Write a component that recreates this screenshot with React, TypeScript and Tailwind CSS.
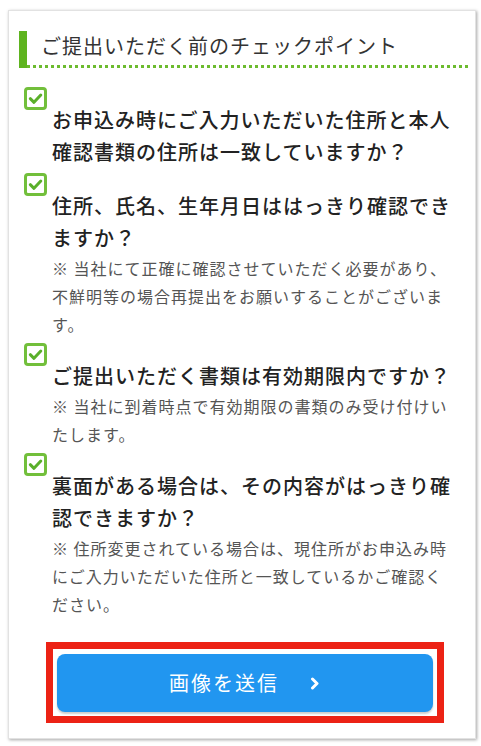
import React from "react";

type CheckItem = {
  question: string;
  note?: string;
};

const items: CheckItem[] = [
  { question: "お申込み時にご入力いただいた住所と本人確認書類の住所は一致していますか？" },
  {
    question: "住所、氏名、生年月日ははっきり確認できますか？",
    note: "※ 当社にて正確に確認させていただく必要があり、不鮮明等の場合再提出をお願いすることがございます。"
  },
  {
    question: "ご提出いただく書類は有効期限内ですか？",
    note: "※ 当社に到着時点で有効期限の書類のみ受け付けいたします。"
  },
  {
    question: "裏面がある場合は、その内容がはっきり確認できますか？",
    note: "※ 住所変更されている場合は、現住所がお申込み時にご入力いただいた住所と一致しているかご確認ください。"
  }
];

function CheckBox() {
  return (
    <svg width="23" height="23" viewBox="0 0 23 23" className="block">
      <rect x="1.5" y="1.5" width="20" height="20" rx="2.5" fill="#fff" stroke="#72bf3b" strokeWidth="3" />
      <path d="M6.3 11.7 L10 15.3 L16.8 8" fill="none" stroke="#5aaf2a" strokeWidth="3" strokeLinecap="round" strokeLinejoin="round" />
    </svg>
  );
}

export default function App() {
  return (
    <div className="min-h-[746px] bg-white pl-[8px] pt-[10px] font-['Noto_Sans_CJK_JP','Noto_Sans',sans-serif]">
      <div className="h-[729px] w-[468px] border border-[#e2e2e2] bg-white pl-[10px] pr-[5px] pt-[20px] shadow-[1px_1px_3px_rgba(0,0,0,0.35)]">
        <div className="flex">
          <div className="w-[8px] shrink-0 bg-[#5eb41f]" />
          <div className="flex-1">
            <h2 className="pl-[14px] pt-[1px] text-[20px] leading-[28px] tracking-[1px] text-[#333] font-normal">
              ご提出いただく前のチェックポイント
            </h2>
            <div className="mt-[5px] h-[3px] bg-[linear-gradient(to_right,#6cbb2e_50%,transparent_50%)] bg-[length:6px_3px]" />
          </div>
        </div>

        <ul className="mt-[19px] flex flex-col gap-[5px] pl-[5px]">
          {items.map((item) => (
            <li key={item.question}>
              <CheckBox />
              <div className="-mt-[6px] w-[433px] pl-[28px]">
                <p className="text-[20px] font-medium leading-[32px] tracking-[1px] text-[#222]">{item.question}</p>
                {item.note ? (
                  <p className="text-[16px] leading-[28px] tracking-[1px] text-[#555]">{item.note}</p>
                ) : null}
              </div>
            </li>
          ))}
        </ul>

        <div className="mt-[24px] flex justify-center">
          <div className="h-[81px] w-[398px] border-[7px] border-[#ec2215] px-[4px] pb-[4px] pt-[5px]">
            <button className="flex h-[58px] w-full items-center justify-center gap-[31px] rounded-[8px] bg-[#2196f0] text-[20px] tracking-[2px] text-white shadow-[0_2px_2px_rgba(0,0,0,0.2)]">
              <span>画像を送信</span>
              <svg width="10" height="13" viewBox="0 0 10 13">
                <path d="M2.5 2 L7 6.5 L2.5 11" fill="none" stroke="#fff" strokeWidth="3" strokeLinecap="round" strokeLinejoin="round" />
              </svg>
            </button>
          </div>
        </div>
      </div>
    </div>
  );
}
